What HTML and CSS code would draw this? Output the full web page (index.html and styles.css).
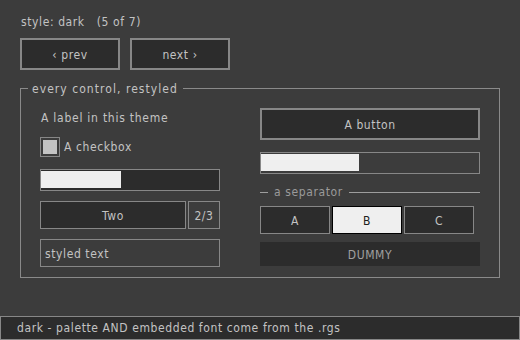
FILE: index.html
```html
<!DOCTYPE html>
<html lang="en">
<head>
<meta charset="UTF-8">
<title>style: dark</title>
<link rel="stylesheet" href="styles.css">
</head>
<body>
<div class="page">
  <div class="header">
    <div class="style-name">style: dark&nbsp;&nbsp;&nbsp;(5 of 7)</div>
    <div class="nav">
      <div class="btn nav-btn">&lsaquo; prev</div>
      <div class="btn nav-btn">next &rsaquo;</div>
    </div>
  </div>

  <div class="group">
    <span class="group-title">every control, restyled</span>
    <div class="col col-left">
      <div class="label">A label in this theme</div>
      <div class="check-row">
        <span class="checkbox"><span class="check-fill"></span></span>
        <span>A checkbox</span>
      </div>
      <div class="progress dark"><div class="bar" style="width: 80px"></div></div>
      <div class="combo-row">
        <div class="combo">Two</div>
        <div class="combo-count">2/3</div>
      </div>
      <div class="textbox">styled text</div>
    </div>
    <div class="col col-right">
      <div class="btn big-btn">A button</div>
      <div class="progress"><div class="bar" style="width: 98px"></div></div>
      <div class="separator">
        <span class="sep-line short"></span>
        <span class="sep-text">a separator</span>
        <span class="sep-line"></span>
      </div>
      <div class="toggles">
        <div class="toggle">A</div>
        <div class="toggle active">B</div>
        <div class="toggle">C</div>
      </div>
      <div class="dummy">DUMMY</div>
    </div>
  </div>

  <div class="status">dark - palette AND embedded font come from the .rgs</div>
</div>
</body>
</html>
```

FILE: styles.css
```css
body {
  margin: 0;
  background-color: #3c3c3c;
  color: #c3c3c3;
  font-family: "DejaVu Sans Condensed", "DejaVu Sans", sans-serif;
  font-size: 12px;
  letter-spacing: 0.6px;
}
.page {
  width: 520px;
  height: 340px;
  display: flex;
  flex-direction: column;
  overflow: hidden;
}
.header {
  padding: 15px 20px 0;
}
.style-name {
  height: 15px;
  line-height: 15px;
  padding-left: 1px;
}
.nav {
  display: flex;
  gap: 10px;
  margin-top: 8px;
}
.btn {
  box-sizing: border-box;
  background-color: #2c2c2c;
  border: 2px solid #878787;
  display: flex;
  align-items: center;
  justify-content: center;
  padding-top: 1px;
}
.nav-btn {
  width: 100px;
  height: 32px;
}
.group {
  position: relative;
  box-sizing: border-box;
  width: 480px;
  height: 190px;
  margin: 18px 0 0 20px;
  padding: 19px 19px 0;
  border: 1px solid #8a8a8a;
  display: flex;
  gap: 40px;
}
.group-title {
  position: absolute;
  top: -8px;
  left: 7px;
  padding: 0 5px 0 4px;
  line-height: 16px;
  letter-spacing: 1.05px;
  background-color: #3c3c3c;
}
.col {
  display: flex;
  flex-direction: column;
}
.col-left {
  width: 180px;
}
.col-right {
  width: 220px;
}
.label {
  height: 20px;
  line-height: 21px;
  padding-left: 1px;
  letter-spacing: 0.75px;
}
.check-row {
  display: flex;
  align-items: center;
  gap: 4px;
  height: 20px;
  margin-top: 8px;
  padding-top: 1px;
}
.checkbox {
  box-sizing: border-box;
  width: 20px;
  height: 20px;
  border: 1px solid #878787;
  padding: 2px;
  margin-top: -1px;
}
.check-fill {
  display: block;
  width: 100%;
  height: 100%;
  background-color: #c3c3c3;
}
.progress {
  box-sizing: border-box;
  height: 22px;
  margin-top: 12px;
  border: 1px solid #878787;
  padding: 1px 0 2px;
}
.progress.dark {
  background-color: #2c2c2c;
}
.progress .bar {
  height: 100%;
  background-color: #efefef;
}
.combo-row {
  display: flex;
  gap: 2px;
  margin-top: 10px;
  height: 28px;
}
.combo, .combo-count, .toggle {
  box-sizing: border-box;
  border: 1px solid #878787;
  background-color: #2c2c2c;
  display: flex;
  align-items: center;
  justify-content: center;
  padding-top: 1px;
}
.combo {
  width: 146px;
}
.combo-count {
  width: 32px;
  background-color: transparent;
}
.textbox {
  box-sizing: border-box;
  height: 28px;
  margin-top: 10px;
  border: 1px solid #878787;
  padding: 1px 0 0 4px;
  display: flex;
  align-items: center;
}
.big-btn {
  height: 32px;
}
.separator {
  display: flex;
  align-items: center;
  gap: 6px;
  height: 12px;
  margin-top: 12px;
  color: #9a9a9a;
}
.sep-line {
  flex: 1;
  height: 1px;
  background-color: #9d9d9d;
}
.sep-line.short {
  flex: none;
  width: 8px;
}
.toggles {
  display: flex;
  gap: 2px;
  margin-top: 8px;
  height: 28px;
}
.toggle {
  width: 70px;
}
.toggle.active {
  background-color: #efefef;
  border-color: #000;
  color: #202020;
}
.dummy {
  height: 24px;
  margin-top: 8px;
  padding-top: 1px;
  box-sizing: border-box;
  background-color: #2c2c2c;
  color: #a0a0a0;
  display: flex;
  align-items: center;
  justify-content: center;
}
.status {
  box-sizing: border-box;
  margin-top: auto;
  height: 24px;
  border: 1px solid #878787;
  background-color: #2c2c2c;
  padding-left: 16px;
  line-height: 23px;
}
```
